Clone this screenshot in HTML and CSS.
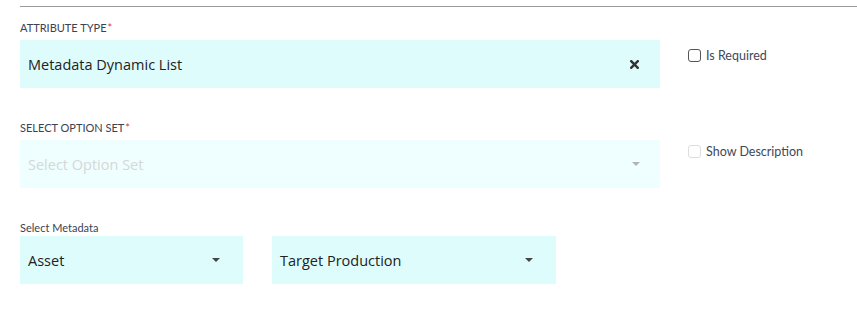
FILE: index.html
```html
<!DOCTYPE html>
<html>
<head>
<meta charset="utf-8">
<link rel="stylesheet" href="styles.css">
</head>
<body>
<div class="page">
  <div class="rule"></div>

  <div class="row row-first">
    <div class="field">
      <div class="label">ATTRIBUTE TYPE<span class="req">*</span></div>
      <div class="select">
        <span class="value">Metadata Dynamic List</span>
        <svg class="clear" width="9" height="9" viewBox="0 0 9 9"><path d="M1.2 1.2 L7.8 7.8 M7.8 1.2 L1.2 7.8" stroke="#333" stroke-width="2.4" stroke-linecap="square"/></svg>
      </div>
    </div>
    <label class="check">
      <span class="box"></span>
      <span class="check-text">Is Required</span>
    </label>
  </div>

  <div class="row row-second">
    <div class="field">
      <div class="label">SELECT OPTION SET<span class="req">*</span></div>
      <div class="select disabled">
        <span class="placeholder">Select Option Set</span>
        <span class="caret caret-light"></span>
      </div>
    </div>
    <label class="check check-disabled">
      <span class="box"></span>
      <span class="check-text">Show Description</span>
    </label>
  </div>

  <div class="meta">
    <div class="label label-plain">Select Metadata</div>
    <div class="meta-row">
      <div class="select small">
        <span class="value">Asset</span>
        <span class="caret"></span>
      </div>
      <div class="select medium">
        <span class="value">Target Production</span>
        <span class="caret"></span>
      </div>
    </div>
  </div>
</div>
</body>
</html>
```

FILE: styles.css
```css
* { box-sizing: border-box; }
html, body { margin: 0; padding: 0; background: #fff; }
body { font-family: "Open Sans", "Noto Sans", sans-serif; color: #222; }

.page { padding: 6px 0 0 20px; width: 857px; }

.rule { height: 1px; background: #9a9a9a; margin-bottom: 15px; }

.row { display: flex; align-items: flex-start; }
.row-second { margin-top: 34px; }

.field { width: 640px; }

.label {
  font-family: "Lato", "Liberation Sans", sans-serif;
  font-size: 11px;
  line-height: 12px;
  color: #3b4252;
  height: 12px;
  margin-bottom: 6px;
}
.req { color: #e0304a; margin-left: 1px; }

.select {
  height: 48px;
  background: #dffcfc;
  display: flex;
  align-items: center;
  padding: 0 21px 0 8px;
  font-size: 14.5px;
}
.select .value { flex: 1; color: #222; }
.select.disabled { background: #effefe; }
.placeholder { flex: 1; color: #d4d8d8; }

.clear { display: block; }

.caret {
  width: 0; height: 0;
  border-left: 4px solid transparent;
  border-right: 4px solid transparent;
  border-top: 4px solid #444;
  margin-right: 1px;
}
.caret-light { border-top-color: #b0b4b4; margin-right: -1px; }

.check {
  display: flex;
  align-items: center;
  margin-left: 28px;
  font-family: "Lato", "Liberation Sans", sans-serif;
  font-size: 12.5px;
  color: #414858;
}
.row-first .check { margin-top: 26px; }
.row-second .check { margin-top: 22px; }
.box {
  width: 13px; height: 13px;
  border: 1px solid #555;
  border-radius: 3px;
  margin-right: 5px;
  background: #fff;
}
.check-disabled .box { border-color: #ddd; }

.meta { margin-top: 34px; }
.label-plain { margin-bottom: 2px; }
.meta-row { display: flex; gap: 29px; }
.select.small { width: 223px; }
.select.medium { width: 284px; }
.select.small, .select.medium { padding-right: 22px; }
```
